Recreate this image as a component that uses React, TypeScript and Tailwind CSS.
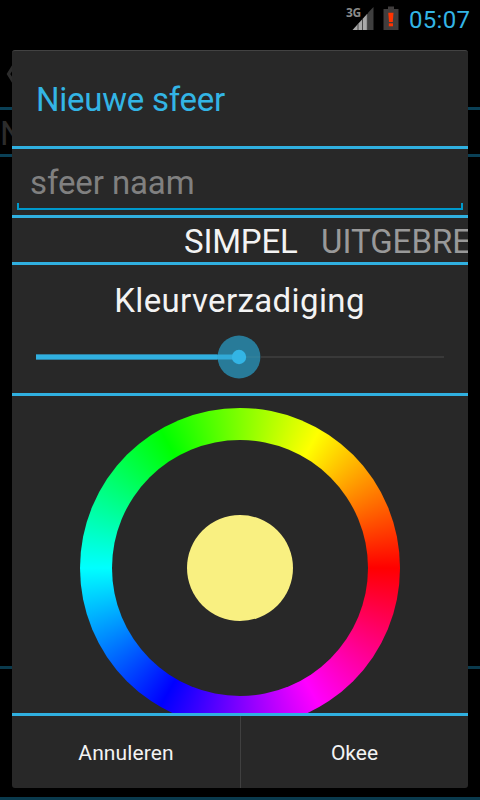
import React from "react";

function StatusBar() {
  return (
    <div className="flex h-[38px] shrink-0 items-start justify-end">
      <div className="flex pt-[7px]">
        <span className="-mr-[8px] h-[12px] w-[14px] whitespace-nowrap font-['Noto_Sans',sans-serif] text-[12px] font-bold leading-[12px] tracking-[-0.3px] text-[#8a8a8a]">3G</span>
        <svg width="22" height="23" viewBox="0 0 22 23">
          <path d="M0.5 23 L15.5 6.5 V23 Z" fill="#a9a9a9" />
          <path d="M6 17V23M10.5 12V23M15.3 7V23" stroke="#484848" strokeWidth="1" />
          <path d="M16 5.8 L21.5 0 V23 H16 Z" fill="#3f3f3f" />
        </svg>
      </div>
      <svg className="ml-[9px] mt-[6px]" width="16" height="24" viewBox="0 0 16 24">
        <path d="M5 0.5H11V3H15.5V24H0.5V3H5Z" fill="#403d3d" />
        <path d="M5.3 6.7H10.5L9.8 16H6Z" fill="#ff3300" />
        <rect x="5.8" y="17.3" width="4.2" height="3" fill="#ff3300" />
      </svg>
      <span className="ml-[10px] mr-[10px] mt-[4px] w-[61px] whitespace-nowrap text-[24px] leading-[32px] tracking-[0.3px] text-[#33b5e5]">05:07</span>
    </div>
  );
}

function DimmedPage() {
  return (
    <div className="flex h-[800px] flex-col bg-black">
      <StatusBar />
      <div className="flex h-[72px] shrink-0 border-b-[3px] border-[#0a4056] pl-[6px] pt-[26px]">
        <svg width="12" height="20" viewBox="0 0 12 20">
          <path d="M8 1L2.5 10L8 19" fill="none" stroke="#2c2c2c" strokeWidth="3.2" />
        </svg>
      </div>
      <div className="h-[47px] shrink-0 border-b-[3px] border-[#0a4056] text-[33px] leading-[47px] text-[#2c2c2c]">N</div>
      <div className="h-[512px] shrink-0 border-b-[3px] border-[#0a3a4d]" />
      <div className="h-[131px] shrink-0 border-b-[3px] border-[#0a3a4d]" />
    </div>
  );
}

function NameField() {
  return (
    <div className="flex h-[69px] shrink-0 flex-col border-b-[3px] border-[#30b0e0] px-[5px]">
      <div className="h-[54px] whitespace-nowrap pl-[13px] pt-[11px] text-[33px] leading-[46px] tracking-[-0.1px] text-[#808080]">sfeer naam</div>
      <div className="h-[7px] border-x-2 border-b-2 border-[#0099cc]" />
    </div>
  );
}

function Tabs() {
  return (
    <div className="flex h-[47px] shrink-0 gap-[24px] overflow-hidden whitespace-nowrap border-b-[3px] border-[#30b0e0] pl-[172px] text-[33px] leading-[47px]">
      <span className="w-[113px] shrink-0 tracking-[-0.2px] text-[#f3f3f3]">SIMPEL</span>
      <span className="shrink-0 text-[#999999]">UITGEBREID</span>
    </div>
  );
}

function Saturation() {
  return (
    <div className="flex h-[131px] shrink-0 flex-col border-b-[3px] border-[#30b0e0] px-[24px] pt-[13px]">
      <div className="-ml-px h-[44px] whitespace-nowrap text-center text-[33px] leading-[46px] tracking-[0.38px] text-[#f3f3f3]">Kleurverzadiging</div>
      <div className="mt-[13px] flex h-[44px] items-center">
        <div className="h-[6px] w-[181px] border-y border-[#2f7f9f] bg-[#30b0e0]" />
        <svg width="44" height="44" viewBox="0 0 44 44">
          <circle cx="22" cy="22" r="21.4" fill="#287b99" />
          <rect x="22" y="21" width="21" height="2" fill="#2f7f9a" />
          <rect x="0" y="19.5" width="22" height="5" fill="#31aad8" />
          <circle cx="22" cy="22" r="7.2" fill="#33b5e5" />
        </svg>
        <div className="h-[2px] flex-1 bg-[#393939]" />
      </div>
    </div>
  );
}

function ColorWheel() {
  return (
    <div className="flex h-[320px] shrink-0 items-start justify-center overflow-hidden border-b-[3px] border-[#30b0e0] pt-[12px]">
      <div className="flex size-[320px] shrink-0 items-center justify-center rounded-full bg-[conic-gradient(from_90deg,#f00,#f0f,#00f,#0ff,#0f0,#ff0,#f00)]">
        <div className="flex size-[256px] items-center justify-center rounded-full bg-[#282828]">
          <div className="size-[106px] rounded-full bg-[#f9f081]" />
        </div>
      </div>
    </div>
  );
}

function Actions() {
  return (
    <div className="flex flex-1 text-center text-[21px] leading-[72px] text-[#f3f3f3]">
      <button className="w-[229px] border-r border-[#404040] pt-px">
        <span className="tracking-[0.1px]">Annuleren</span>
      </button>
      <button className="flex-1 pt-px">
        <span>Okee</span>
      </button>
    </div>
  );
}

export default function App() {
  return (
    <div className="relative h-[800px] w-[480px] overflow-hidden font-['Roboto',sans-serif]">
      <DimmedPage />
      <div className="absolute left-[12px] top-[50px] flex h-[738px] w-[456px] flex-col overflow-hidden rounded-[3px] border-t border-[#424242] bg-[#282828]">
        <div className="h-[98px] shrink-0 whitespace-nowrap border-b-[3px] border-[#30b0e0] pl-[24px] text-[33px] leading-[97px] tracking-[-0.25px] text-[#33b5e5]">Nieuwe sfeer</div>
        <NameField />
        <Tabs />
        <Saturation />
        <ColorWheel />
        <Actions />
      </div>
    </div>
  );
}
